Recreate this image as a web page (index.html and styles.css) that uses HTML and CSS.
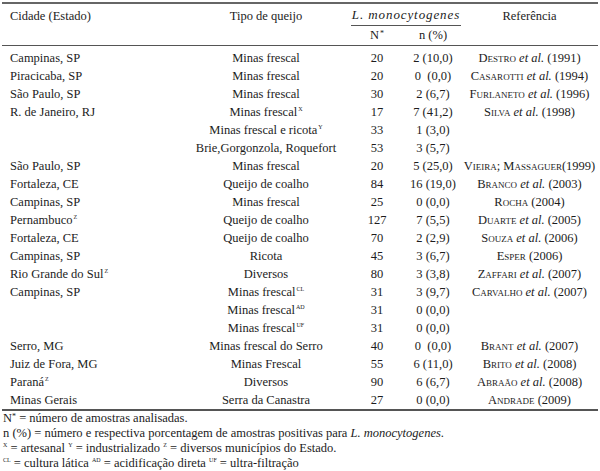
FILE: index.html
```html
<!DOCTYPE html>
<html lang="pt">
<head>
<meta charset="utf-8">
<link rel="stylesheet" href="styles.css">
</head>
<body>
<div class="page">
<table class="tbl">
  <colgroup>
    <col class="c1"><col class="c2"><col class="c3"><col class="c4"><col class="c5">
  </colgroup>
  <thead>
    <tr class="h1">
      <th class="left">Cidade (Estado)</th>
      <th>Tipo de queijo</th>
      <th colspan="2" class="span"><span class="lm"><i>L. monocytogenes</i></span></th>
      <th>Referência</th>
    </tr>
    <tr class="h2">
      <th></th><th></th>
      <th>N<sup class="ast">*</sup></th>
      <th>n (%)</th>
      <th></th>
    </tr>
  </thead>
  <tbody>
    <tr class="first"><td class="left">Campinas, SP</td><td>Minas frescal</td><td>20</td><td>2 (10,0)</td><td><span class="sc">Destro</span> <i>et al.</i> (1991)</td></tr>
    <tr><td class="left">Piracicaba, SP</td><td>Minas frescal</td><td>20</td><td>0&nbsp; (0,0)</td><td><span class="sc">Casarotti</span> <i>et al.</i> (1994)</td></tr>
    <tr><td class="left">São Paulo, SP</td><td>Minas frescal</td><td>30</td><td>2 (6,7)</td><td><span class="sc">Furlaneto</span> <i>et al.</i> (1996)</td></tr>
    <tr><td class="left">R. de Janeiro, RJ</td><td>Minas frescal<sup>X</sup></td><td>17</td><td>7 (41,2)</td><td><span class="sc">Silva</span> <i>et al.</i> (1998)</td></tr>
    <tr><td class="left"></td><td>Minas frescal e ricota<sup>Y</sup></td><td>33</td><td>1 (3,0)</td><td></td></tr>
    <tr><td class="left"></td><td>Brie,Gorgonzola, Roquefort</td><td>53</td><td>3 (5,7)</td><td></td></tr>
    <tr><td class="left">São Paulo, SP</td><td>Minas frescal</td><td>20</td><td>5 (25,0)</td><td><span class="sc">Vieira; Massaguer</span>(1999)</td></tr>
    <tr><td class="left">Fortaleza, CE</td><td>Queijo de coalho</td><td>84</td><td>16 (19,0)</td><td><span class="sc">Branco</span> <i>et al.</i> (2003)</td></tr>
    <tr><td class="left">Campinas, SP</td><td>Minas frescal</td><td>25</td><td>0 (0,0)</td><td><span class="sc">Rocha</span> (2004)</td></tr>
    <tr><td class="left">Pernambuco<sup>Z</sup></td><td>Queijo de coalho</td><td>127</td><td>7 (5,5)</td><td><span class="sc">Duarte</span> <i>et al.</i> (2005)</td></tr>
    <tr><td class="left">Fortaleza, CE</td><td>Queijo de coalho</td><td>70</td><td>2 (2,9)</td><td><span class="sc">Souza</span> <i>et al.</i> (2006)</td></tr>
    <tr><td class="left">Campinas, SP</td><td>Ricota</td><td>45</td><td>3 (6,7)</td><td><span class="sc">Esper</span> (2006)</td></tr>
    <tr><td class="left">Rio Grande do Sul<sup>Z</sup></td><td>Diversos</td><td>80</td><td>3 (3,8)</td><td><span class="sc">Zaffari</span> <i>et al.</i> (2007)</td></tr>
    <tr><td class="left">Campinas, SP</td><td>Minas frescal<sup>CL</sup></td><td>31</td><td>3 (9,7)</td><td><span class="sc">Carvalho</span> <i>et al.</i> (2007)</td></tr>
    <tr><td class="left"></td><td>Minas frescal<sup>AD</sup></td><td>31</td><td>0 (0,0)</td><td></td></tr>
    <tr><td class="left"></td><td>Minas frescal<sup>UF</sup></td><td>31</td><td>0 (0,0)</td><td></td></tr>
    <tr><td class="left">Serro, MG</td><td>Minas frescal do Serro</td><td>40</td><td>0&nbsp; (0,0)</td><td><span class="sc">Brant</span> <i>et al.</i> (2007)</td></tr>
    <tr><td class="left">Juiz de Fora, MG</td><td>Minas Frescal</td><td>55</td><td>6 (11,0)</td><td><span class="sc">Brito</span> <i>et al.</i> (2008)</td></tr>
    <tr><td class="left">Paraná<sup>Z</sup></td><td>Diversos</td><td>90</td><td>6 (6,7)</td><td><span class="sc">Abraão</span> <i>et al.</i> (2008)</td></tr>
    <tr class="last"><td class="left">Minas Gerais</td><td>Serra da Canastra</td><td>27</td><td>0 (0,0)</td><td><span class="sc">Andrade</span> (2009)</td></tr>
  </tbody>
</table>
<div class="notes">
  <p>N<sup class="ast">*</sup> = número de amostras analisadas.</p>
  <p>n (%) = número e respectiva porcentagem de amostras positivas para <i>L. monocytogenes</i>.</p>
  <p><sup>X</sup> = artesanal <sup>Y</sup> = industrializado <sup>Z</sup> = diversos municípios do Estado.</p>
  <p><sup>CL</sup> = cultura lática <sup>AD</sup> = acidificação direta <sup>UF</sup> = ultra-filtração</p>
</div>
</div>
</body>
</html>
```

FILE: styles.css
```css
html, body {
  margin: 0;
  padding: 0;
  background: #ffffff;
}
body {
  font-family: "Liberation Serif", "Times New Roman", serif;
  color: #1c1c1c;
}
.page {
  width: 600px;
  padding: 2px 2px 0 2px;
  box-sizing: border-box;
}
.tbl {
  width: 596px;
  border-collapse: collapse;
  table-layout: fixed;
  font-size: 12.5px;
}
.c1 { width: 181px; }
.c2 { width: 166px; }
.c3 { width: 56px; }
.c4 { width: 56px; }
.c5 { width: 137px; }
.tbl th, .tbl td {
  padding: 0;
  text-align: center;
  font-weight: normal;
  white-space: nowrap;
  line-height: 18px;
  height: 18px;
}
.tbl .left {
  text-align: left;
  padding-left: 8px;
}
thead {
  border-top: 2px solid #666;
  border-bottom: 1px solid #555;
}
.h1 th {
  height: 21px;
  line-height: 18px;
  vertical-align: middle;
  padding-top: 1px;
}
.h1 th.span {
  padding-left: 2px;
}
.lm {
  display: block;
  border-bottom: 1px solid #555;
  padding-bottom: 1px;
  font-size: 13px;
  letter-spacing: 0.9px;
}
.h2 th {
  height: 19px;
  line-height: 19px;
}
.first td {
  padding-top: 3px;
}
tbody {
  border-bottom: 2px solid #555;
}
.sc {
  font-variant: small-caps;
}
sup {
  font-size: 6px;
  line-height: 0;
  vertical-align: 5px;
  margin-left: 1px;
}
sup.ast {
  font-size: 8px;
  vertical-align: 3px;
}
.notes {
  font-size: 12.5px;
  line-height: 15px;
  padding-top: 0;
}
.notes p {
  margin: 0;
  padding-left: 1px;
}
.notes sup {
  margin-left: 0;
}
```
